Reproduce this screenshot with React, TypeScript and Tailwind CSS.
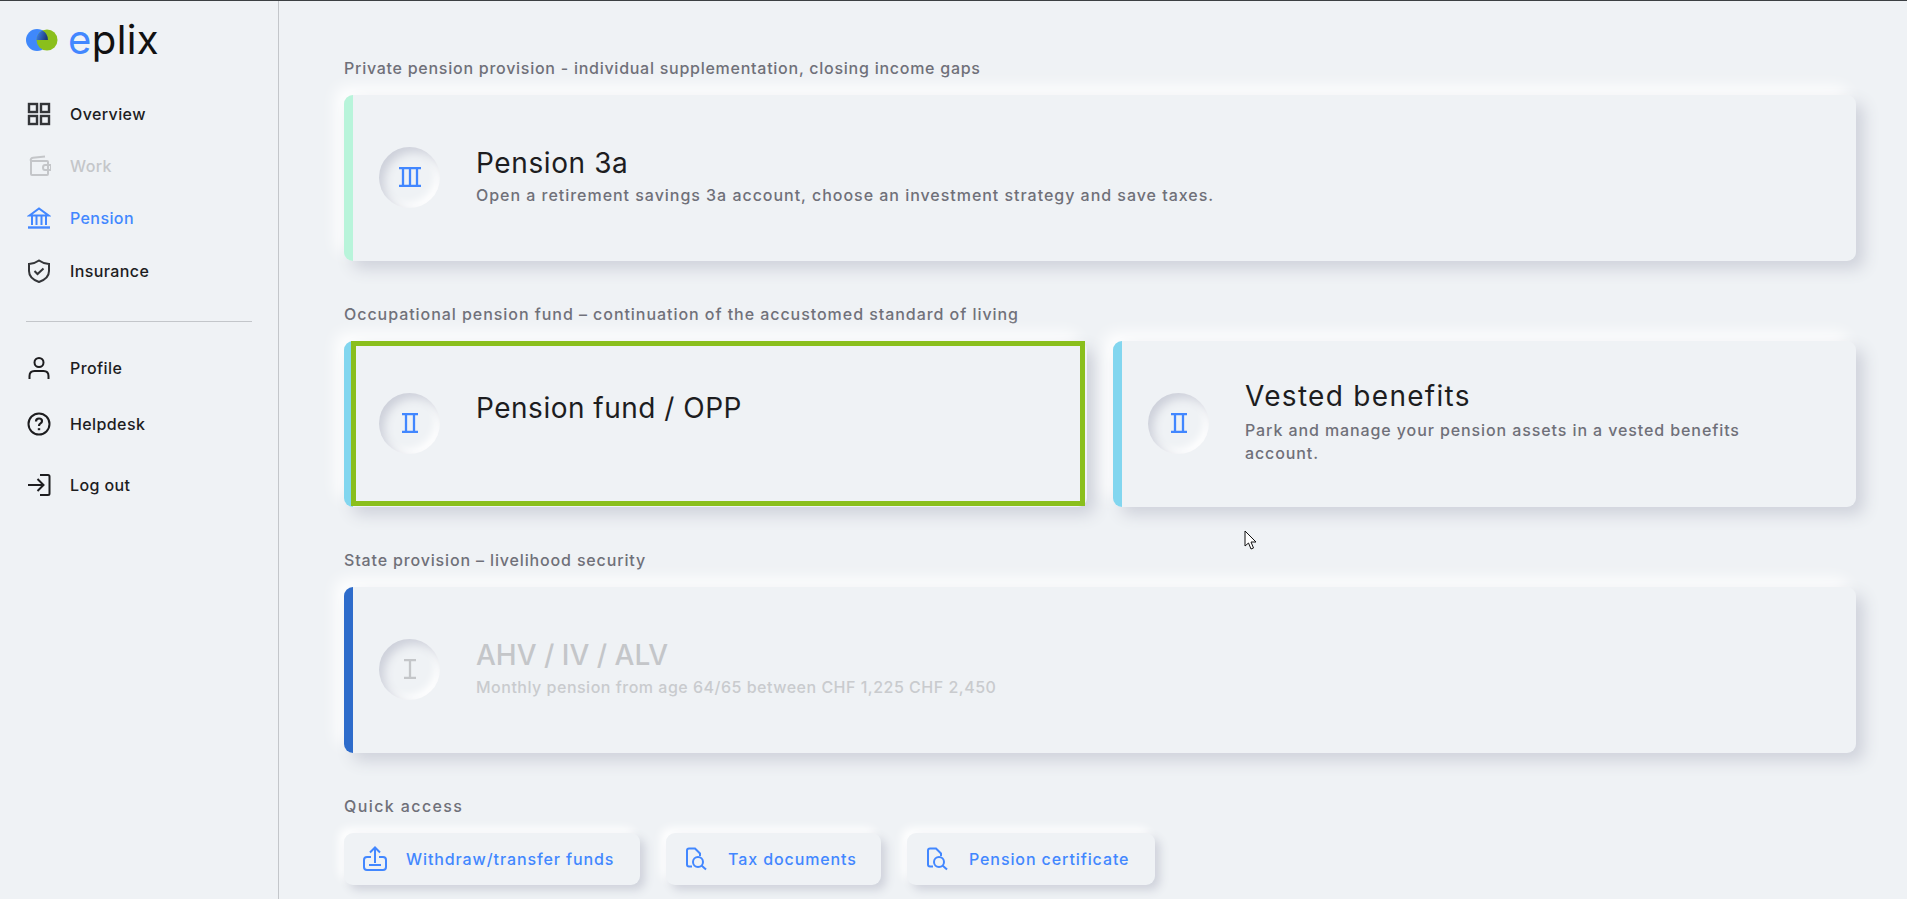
import React from 'react';

const font = { fontFamily: 'Inter, "Noto Sans", sans-serif' };

function NavIcon({ name }: { name: string }) {
  const common = {
    width: 24,
    height: 24,
    viewBox: '0 0 24 24',
    fill: 'none',
    stroke: 'currentColor',
    strokeWidth: 2,
  };
  switch (name) {
    case 'overview':
      return (
        <svg {...common} strokeWidth="2.4">
          <rect x="2" y="2" width="8" height="8" />
          <rect x="14" y="2" width="8" height="8" />
          <rect x="2" y="14" width="8" height="8" />
          <rect x="14" y="14" width="8" height="8" />
        </svg>
      );
    case 'work':
      return (
        <svg {...common}>
          <path d="M4 7 L4 20 Q4 21 5 21 L20 21 Q21 21 21 20 L21 8 Q21 7 20 7 L5 7 Q3 7 4 5 Q4.5 4 6 3.8 L18 2.5" />
          <path d="M24 11 L18 11 Q16 11 16 13.5 Q16 16 18 16 L24 16 Z" />
        </svg>
      );
    case 'pension':
      return (
        <svg {...common}>
          <path d="M2.5 9.5 L12 2.5 L21.5 9.5 Z" />
          <path d="M5 9.5 V19 M9.5 9.5 V19 M14.5 9.5 V19 M19 9.5 V19" />
          <path d="M1 21.5 H23" strokeWidth="2.4" />
        </svg>
      );
    case 'insurance':
      return (
        <svg {...common}>
          <path d="M12 1.5 Q16 4.5 22 5 V12 Q22 19.5 12 23 Q2 19.5 2 12 V5 Q8 4.5 12 1.5 Z" />
          <path d="M7.5 12 L10.5 15 L16.5 9.5" />
        </svg>
      );
    case 'profile':
      return (
        <svg {...common}>
          <circle cx="12" cy="6.5" r="4.5" />
          <path d="M2.5 23 V20 Q2.5 15 7.5 15 H16.5 Q21.5 15 21.5 20 V23" />
        </svg>
      );
    case 'helpdesk':
      return (
        <svg {...common}>
          <circle cx="12" cy="12" r="10.5" />
          <path d="M9 9.5 Q9 6.5 12 6.5 Q15 6.5 15 9 Q15 10.8 13.3 11.6 Q12 12.3 12 14" strokeWidth="2.2" />
          <path d="M12 16.2 V18.2" strokeWidth="2.4" />
        </svg>
      );
    default:
      return (
        <svg {...common}>
          <path d="M1 12 H16 M10.5 6 L16.5 12 L10.5 18" />
          <path d="M13 2 H21 Q22.5 2 22.5 3.5 V20.5 Q22.5 22 21 22 H13" />
        </svg>
      );
  }
}

function Numeral({ count, muted }: { count: number; muted?: boolean }) {
  const width = count === 3 ? 22 : count === 2 ? 16 : 12;
  const xs = count === 3 ? [4, 11, 18] : count === 2 ? [4, 12] : [6];
  return (
    <svg width={width} height={20} viewBox={`0 0 ${width} 20`} fill="none" stroke="currentColor" strokeWidth="2.3" className={muted ? 'text-[#c4c6c9]' : 'text-[#4287ff]'}>
      <path d={`M0 1 H${width} M0 19 H${width}`} />
      {xs.map((x) => (
        <path key={x} d={`M${x} 1 V19`} />
      ))}
    </svg>
  );
}

function Upload() {
  return (
    <svg width="24" height="26" viewBox="0 0 24 26" fill="none" stroke="#4287ff" strokeWidth="2">
      <path d="M12 17 V2 M7 6.5 L12 1.5 L17 6.5" />
      <path d="M8 11 H4 Q1 11 1 14 V21 Q1 24 4 24 H20 Q23 24 23 21 V14 Q23 11 20 11 H16" />
      <path d="M6 19 H18" />
    </svg>
  );
}

function FileSearch() {
  return (
    <svg width="22" height="24" viewBox="0 0 22 24" fill="none" stroke="#4287ff" strokeWidth="2">
      <path d="M7 19.5 H4 Q2 19.5 2 17.5 V3.5 Q2 1.5 4 1.5 H10 L15 6.5 V9" />
      <circle cx="13" cy="15" r="5" />
      <path d="M16.5 18.5 L21 22.5" />
    </svg>
  );
}

type CardProps = {
  stripe: string;
  numeral: number;
  title: string;
  titleClass?: string;
  text?: string;
  textClass?: string;
  muted?: boolean;
  focused?: boolean;
};

function Card({ stripe, numeral, title, titleClass, text, textClass, muted, focused }: CardProps) {
  return (
    <div className="relative flex flex-1 h-[166px]">
      <div className={`w-[9px] shrink-0 rounded-l-[9px] ${stripe}`} />
      <div className="flex flex-1 items-center pl-[26px] pr-[50px]">
        <div className="flex items-center justify-center w-[61px] h-[61px] mb-[2px] shrink-0 rounded-full shadow-[inset_5px_5px_10px_#cdd0da,inset_-4px_-4px_8px_#ffffff]">
          <Numeral count={numeral} muted={muted} />
        </div>
        <div className="ml-[36px] pb-[4px]">
          <h3 className={`text-[28px] leading-[34px] ${titleClass} ${muted ? 'text-[#c4c6c9]' : 'text-[#1d1d1f]'}`}>
            {title}
          </h3>
          {text ? (
            <p className={`text-[16px] leading-[23px] font-medium ${textClass} ${muted ? 'text-[#c9cbce]' : 'text-[#6f7079]'}`}>
              {text}
            </p>
          ) : (
            <div className="h-[29px]" />
          )}
        </div>
      </div>
      {focused && <div className="absolute left-[7px] right-[2px] top-0 bottom-[1px] border-[5px] border-[#8abf1c]" />}
    </div>
  );
}

function CardShell({ children }: { children: React.ReactNode }) {
  return (
    <div className="flex flex-1 rounded-[9px] bg-[#eff2f5] shadow-[8px_8px_16px_#cfd2db,-8px_-8px_16px_#ffffff]">
      {children}
    </div>
  );
}

function Label({ children, className }: { children: React.ReactNode; className: string }) {
  return <h2 className={`text-[16px] leading-[24px] font-medium text-[#6f7079] mb-[15px] ${className}`}>{children}</h2>;
}

const topNav = [
  { key: 'overview', label: 'Overview', cls: 'h-[52px] text-[#1d1d1f]', iconCls: 'text-[#333538]' },
  { key: 'work', label: 'Work', cls: 'h-[52px] text-[#c4c6c9]', iconCls: 'text-[#c4c6c9]' },
  { key: 'pension', label: 'Pension', cls: 'h-[52px] text-[#4287ff]', iconCls: 'text-[#4287ff]' },
  { key: 'insurance', label: 'Insurance', cls: 'h-[53px] pt-[1px] text-[#1d1d1f]', iconCls: 'text-[#333538]' },
];

const bottomNav = [
  { key: 'profile', label: 'Profile', cls: 'h-[56px]' },
  { key: 'helpdesk', label: 'Helpdesk', cls: 'h-[56px]' },
  { key: 'logout', label: 'Log out', cls: 'h-[66px]' },
];

const quick = [
  { label: 'Withdraw/transfer funds', icon: <Upload />, width: 'w-[296px]' },
  { label: 'Tax documents', icon: <FileSearch />, width: 'w-[215px]' },
  { label: 'Pension certificate', icon: <FileSearch />, width: 'w-[248px]' },
];

export default function App() {
  return (
    <div style={font} className="relative flex h-[899px] overflow-hidden bg-[#eff2f5] border-t border-[#3c4043]">
      <aside className="w-[279px] shrink-0 border-r border-[#c3c6ca] pl-[26px]">
        <div className="flex items-center h-[24px] mt-[27px]">
          <svg width="32" height="22" viewBox="0 0 32 22">
            <defs>
              <linearGradient id="lens" x1="0" y1="0" x2="1" y2="0.3">
                <stop offset="0" stopColor="#3f88fb" />
                <stop offset="1" stopColor="#1f3f7a" />
              </linearGradient>
            </defs>
            <circle cx="11" cy="11" r="11" fill="#3f88fb" />
            <circle cx="21" cy="11" r="10.5" fill="#8abf1c" />
            <path d="M10.5 11 A10.5 10.5 0 0 1 16.54 1.5 A11 11 0 0 1 22 11 Z" fill="url(#lens)" />
          </svg>
          <span className="ml-[10px] text-[40px] leading-[24px] font-normal tracking-[0.4px] text-[#111]">
            <span className="text-[#4287ff]">e</span>plix
          </span>
        </div>
        <nav className="mt-[36px]">
          {topNav.map((item) => (
            <div key={item.key} className={`flex items-center text-[16px] font-medium tracking-[0.4px] ${item.cls}`}>
              <span className={`flex w-[44px] pl-[1px] ${item.iconCls}`}><NavIcon name={item.key} /></span>
              {item.label}
            </div>
          ))}
        </nav>
        <div className="w-[226px] h-px bg-[#c3c6ca] mt-[24px] mb-[18px]" />
        <nav>
          {bottomNav.map((item) => (
            <div key={item.key} className={`flex items-center text-[16px] font-medium tracking-[0.4px] text-[#1d1d1f] ${item.cls}`}>
              <span className="flex w-[44px] pl-[1px] text-[#1d1d1f]"><NavIcon name={item.key} /></span>
              {item.label}
            </div>
          ))}
        </nav>
      </aside>

      <main className="flex-1 pt-[55px] pl-[65px] pr-[51px]">
        <Label className="tracking-[0.74px]">Private pension provision - individual supplementation, closing income gaps</Label>
        <CardShell>
          <Card
            stripe="bg-[#b8f4da]"
            numeral={3}
            title="Pension 3a"
            titleClass="font-normal tracking-[0.6px]"
            text="Open a retirement savings 3a account, choose an investment strategy and save taxes."
            textClass="mt-[4px] tracking-[0.97px]"
          />
        </CardShell>

        <div className="mt-[41px]">
          <Label className="tracking-[0.95px]">Occupational pension fund – continuation of the accustomed standard of living</Label>
          <div className="flex gap-[26px]">
            <CardShell>
              <Card stripe="bg-[#82d6ef]" numeral={2} title="Pension fund / OPP" titleClass="font-normal tracking-[0.5px]" focused />
            </CardShell>
            <CardShell>
              <Card
                stripe="bg-[#82d6ef]"
                numeral={2}
                title="Vested benefits"
                titleClass="font-normal tracking-[1.3px]"
                text="Park and manage your pension assets in a vested benefits account."
                textClass="mt-[6px] tracking-[0.9px]"
              />
            </CardShell>
          </div>
        </div>

        <div className="mt-[41px]">
          <Label className="tracking-[0.85px]">State provision – livelihood security</Label>
          <CardShell>
            <Card
              stripe="bg-[#2e6ccb]"
              numeral={1}
              title="AHV / IV / ALV"
              titleClass="font-medium tracking-[0px]"
              text="Monthly pension from age 64/65 between CHF 1,225 CHF 2,450"
              textClass="mt-[4px] tracking-[0.5px]"
              muted
            />
          </CardShell>
        </div>

        <div className="mt-[41px]">
          <Label className="tracking-[1.4px]">Quick access</Label>
          <div className="flex gap-[26px]">
            {quick.map((q) => (
              <div
                key={q.label}
                className={`flex items-center h-[52px] pl-[19px] rounded-[9px] bg-[#eff2f5] text-[16px] font-medium tracking-[0.9px] text-[#4287ff] shadow-[5px_5px_10px_#cfd2db,-5px_-5px_10px_#ffffff] ${q.width}`}
              >
                <span className="flex w-[43px]">{q.icon}</span>
                {q.label}
              </div>
            ))}
          </div>
        </div>
      </main>

      <svg className="absolute left-[1244px] top-[529px]" width="13" height="20" viewBox="0 0 13 20">
        <path d="M1 1 V16 L4.5 13 L7 19 L9.5 18 L7 12 H12 Z" fill="#ffffff" stroke="#111111" strokeWidth="1" />
      </svg>
    </div>
  );
}
